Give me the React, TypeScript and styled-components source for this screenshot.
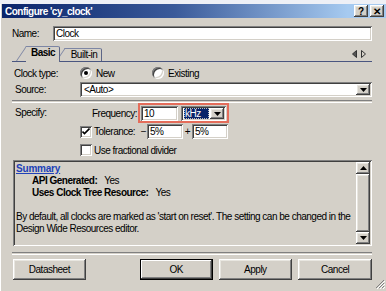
import React from 'react';
import styled, { createGlobalStyle, css } from 'styled-components';

const GlobalStyle = createGlobalStyle`
  html, body {
    margin: 0;
    padding: 0;
    background: #eef0f6;
  }
  body {
    font-family: "Liberation Sans", Arial, sans-serif;
    font-size: 10px;
    letter-spacing: -0.5px;
    color: #000;
  }
`;

const raised = css`
  background: #d4d0c8;
  box-shadow: inset -1px -1px #404040, inset 1px 1px #ffffff,
    inset -2px -2px #808080, inset 2px 2px #e8e6e0;
`;

const sunken = css`
  background: #ffffff;
  box-shadow: inset 1px 1px #808080, inset -1px -1px #ffffff,
    inset 2px 2px #404040, inset -2px -2px #d4d0c8;
`;

const Window = styled.div`
  position: relative;
  margin-top: 4px;
  width: 386px;
  height: 287px;
  box-sizing: border-box;
  padding-left: 2px;
  background: #d4d0c8;
  box-shadow: inset 1px 0 #ffffff;
  display: flex;
  flex-direction: column;
`;

const TitleBar = styled.div`
  height: 14px;
  display: flex;
  align-items: center;
  padding: 0 2px 0 3px;
  background: linear-gradient(90deg, #0a246a 0%, #3a5a9a 45%, #a6caf0 90%);
  color: #ffffff;
  font-weight: bold;
`;

const TitleButtons = styled.div`
  margin-left: auto;
  display: flex;
  gap: 2px;
`;

const TitleButton = styled.div`
  ${raised};
  width: 14px;
  height: 12px;
  display: flex;
  align-items: center;
  justify-content: center;
  color: #000;
  font-size: 10px;
  letter-spacing: 0;
  font-weight: bold;
`;

const Body = styled.div`
  flex: 1;
  display: flex;
  flex-direction: column;
  padding: 8px 14px 0 10px;
`;

const Row = styled.div<{ $h: number; $mt?: number }>`
  display: flex;
  align-items: center;
  height: ${(p) => p.$h}px;
  margin-top: ${(p) => p.$mt ?? 0}px;
`;

const Label = styled.div<{ $w: number; $pl?: number }>`
  width: ${(p) => p.$w}px;
  padding-left: ${(p) => p.$pl ?? 0}px;
  box-sizing: border-box;
  flex: none;
  white-space: nowrap;
`;

const TextBox = styled.div<{ $w?: number }>`
  ${sunken};
  height: 15px;
  box-sizing: border-box;
  ${(p) => (p.$w ? `width: ${p.$w}px; flex: none;` : 'flex: 1;')}
  padding: 2px 3px 0;
  line-height: 12px;
  white-space: nowrap;
  overflow: hidden;
`;

const Select = styled.div<{ $w?: number }>`
  ${sunken};
  height: 15px;
  box-sizing: border-box;
  ${(p) => (p.$w ? `width: ${p.$w}px; flex: none;` : 'flex: 1;')}
  display: flex;
  align-items: center;
  padding: 2px 2px 2px 3px;
`;

const SelectText = styled.div<{ $hl?: boolean }>`
  flex: 1;
  height: 11px;
  line-height: 11px;
  padding-left: 1px;
  ${(p) =>
    p.$hl &&
    css`
      background: #0a246a;
      color: #ffffff;
      outline: 1px dotted #c0c0c0;
      outline-offset: -1px;
      margin-right: 1px;
    `}
`;

const DropButton = styled.div`
  ${raised};
  width: 14px;
  height: 11px;
  flex: none;
  display: flex;
  align-items: center;
  justify-content: center;
`;

const TabStrip = styled.div`
  margin-top: 4px;
  height: 16px;
  display: flex;
  align-items: flex-end;
  padding-left: 4px;
  border-bottom: 1px solid #4a5680;
`;

const Tab = styled.div<{ $active?: boolean; $w: number }>`
  position: relative;
  width: ${(p) => p.$w}px;
  height: ${(p) => (p.$active ? 16 : 13)}px;
  margin-bottom: ${(p) => (p.$active ? -1 : 0)}px;
  margin-left: ${(p) => (p.$active ? 0 : -4)}px;
  z-index: ${(p) => (p.$active ? 2 : 1)};
  font-weight: ${(p) => (p.$active ? 'bold' : 'normal')};

  &::before {
    content: '';
    position: absolute;
    left: 0;
    bottom: ${(p) => (p.$active ? 1 : 0)}px;
    height: ${(p) => (p.$active ? 15 : 13)}px;
    width: 18px;
    background: #d4d0c8;
    border-left: 1px solid #7d86a4;
    border-top: 1px solid #7d86a4;
    box-sizing: border-box;
    transform: skewX(-34deg);
    transform-origin: bottom left;
  }
  &::after {
    content: '';
    position: absolute;
    left: 10px;
    right: 0;
    top: 0;
    bottom: 0;
    background: #d4d0c8;
    border-top: 1px solid #7d86a4;
    border-right: 1px solid #5c6586;
    border-top-right-radius: 2px;
    box-sizing: border-box;
  }
`;

const TabLabel = styled.span`
  position: relative;
  z-index: 1;
  display: block;
  padding-left: 10px;
  text-align: center;
  line-height: 14px;
`;

const TabArrows = styled.div`
  margin-left: auto;
  margin-right: 6px;
  margin-bottom: 3px;
  display: flex;
  gap: 4px;
`;

const RadioCircle = styled.div<{ $on?: boolean }>`
  position: relative;
  width: 12px;
  height: 12px;
  flex: none;
  border-radius: 50%;
  background: #ffffff;
  box-shadow: inset 1px 1px #808080, inset -1px -1px #ffffff,
    inset 2px 2px #404040, inset -2px -2px #d4d0c8;
  &::after {
    content: '';
    display: ${(p) => (p.$on ? 'block' : 'none')};
    position: absolute;
    left: 4px;
    top: 4px;
    width: 4px;
    height: 4px;
    border-radius: 50%;
    background: #000;
  }
`;

const Option = styled.div<{ $w?: number }>`
  display: flex;
  align-items: center;
  gap: 4px;
  ${(p) => (p.$w ? `width: ${p.$w}px;` : '')}
`;

const CheckBox = styled.div`
  ${sunken};
  width: 12px;
  height: 12px;
  flex: none;
  display: flex;
  align-items: center;
  justify-content: center;
`;

const Etched = styled.div<{ $mt: number }>`
  margin-top: ${(p) => p.$mt}px;
  height: 1px;
  border-top: 1px solid #808080;
  border-bottom: 1px solid #ffffff;
`;

const SpecifyGrid = styled.div`
  display: grid;
  grid-template-columns: 68px 1fr;
`;

const SpecifyLabel = styled.div`
  padding: 4px 0 0 3px;
`;

const SpecifyCol = styled.div`
  display: flex;
  flex-direction: column;
`;

const Highlight = styled.div`
  display: flex;
  gap: 3px;
  padding: 1px;
  width: 91px;
  height: 20px;
  box-sizing: border-box;
  border: 2px solid #e46d5b;
  margin-left: -2px;
`;

const Sign = styled.div<{ $w: number }>`
  width: ${(p) => p.$w}px;
  flex: none;
  text-align: center;
`;

const SummaryBox = styled.div`
  margin: 4px 0 0 1px;
  height: 86px;
  box-sizing: border-box;
  display: flex;
  background: #d4d0c8;
  box-shadow: inset 1px 1px #808080, inset -1px -1px #ffffff,
    inset 2px 2px #404040, inset -2px -2px #d4d0c8;
  padding: 2px;
`;

const SummaryText = styled.div`
  flex: 1;
  padding: 1px 0 0 1px;
  line-height: 12px;
  white-space: nowrap;
`;

const SummaryLink = styled.div`
  color: #2040b8;
  font-weight: bold;
  text-decoration: underline;
  letter-spacing: -0.2px;
`;

const SummaryItem = styled.div`
  padding-left: 16px;
  font-weight: bold;
`;

const ItemValue = styled.span`
  font-weight: normal;
  margin-left: 7px;
`;

const Para = styled.div`
  margin-top: 12px;
`;

const ScrollBar = styled.div`
  width: 14px;
  flex: none;
  display: flex;
  flex-direction: column;
`;

const ScrollBtn = styled.div`
  ${raised};
  height: 12px;
  display: flex;
  align-items: center;
  justify-content: center;
`;

const ScrollThumb = styled.div`
  ${raised};
  flex: 1;
`;

const ButtonRow = styled.div`
  margin-top: 4px;
  display: flex;
  padding-left: 1px;
`;

const Button = styled.div<{ $w: number; $ml?: number; $default?: boolean }>`
  ${raised};
  width: ${(p) => p.$w}px;
  margin-left: ${(p) => p.$ml ?? 0}px;
  height: 21px;
  display: flex;
  align-items: center;
  justify-content: center;
  ${(p) =>
    p.$default &&
    css`
      box-shadow: inset 0 0 0 1px #000, inset -2px -2px #404040,
        inset 2px 2px #ffffff, inset -3px -3px #808080;
    `}
`;

const Grip = styled.svg`
  position: absolute;
  right: 1px;
  bottom: 2px;
`;

const Tri = ({ dir }: { dir: 'down' | 'up' }) => (
  <svg width="7" height="4" viewBox="0 0 7 4">
    <path d={dir === 'down' ? 'M0 0h7L3.5 4z' : 'M0 4h7L3.5 0z'} fill="#000" />
  </svg>
);

const Check = () => (
  <svg width="8" height="7" viewBox="0 0 8 7">
    <path d="M0.5 3.5l2 2 5-5" stroke="#000" strokeWidth="1.6" fill="none" />
  </svg>
);

export default function App() {
  return (
    <>
      <GlobalStyle />
      <Window>
        <TitleBar>
          Configure 'cy_clock'
          <TitleButtons>
            <TitleButton>?</TitleButton>
            <TitleButton>✕</TitleButton>
          </TitleButtons>
        </TitleBar>
        <Body>
          <Row $h={15}>
            <Label $w={41}>Name:</Label>
            <TextBox>Clock</TextBox>
          </Row>

          <TabStrip>
            <Tab $active $w={44}>
              <TabLabel>Basic</TabLabel>
            </Tab>
            <Tab $w={46}>
              <TabLabel>Built-in</TabLabel>
            </Tab>
            <TabArrows>
              <svg width="5" height="8" viewBox="0 0 5 8">
                <path d="M4.5 0.5v7L0.5 4z" fill="#555" stroke="#333" />
              </svg>
              <svg width="5" height="8" viewBox="0 0 5 8">
                <path d="M0.5 0.5v7L4.5 4z" fill="#d4d0c8" stroke="#333" />
              </svg>
            </TabArrows>
          </TabStrip>

          <Row $h={14} $mt={4}>
            <Label $w={68} $pl={2}>Clock type:</Label>
            <Option $w={72}>
              <RadioCircle $on />
              New
            </Option>
            <Option>
              <RadioCircle />
              Existing
            </Option>
          </Row>

          <Row $h={15} $mt={2}>
            <Label $w={68} $pl={3}>Source:</Label>
            <Select>
              <SelectText>&lt;Auto&gt;</SelectText>
              <DropButton>
                <Tri dir="down" />
              </DropButton>
            </Select>
          </Row>

          <Etched $mt={3} />

          <SpecifyGrid>
            <SpecifyLabel>Specify:</SpecifyLabel>
            <SpecifyCol>
              <Row $h={20}>
                <Label $w={60} $pl={12}>Frequency:</Label>
                <Highlight>
                  <TextBox $w={37}>10</TextBox>
                  <Select $w={45}>
                    <SelectText $hl>kHz</SelectText>
                    <DropButton>
                      <Tri dir="down" />
                    </DropButton>
                  </Select>
                </Highlight>
              </Row>
              <Row $h={15} $mt={1}>
                <CheckBox>
                  <Check />
                </CheckBox>
                <Label $w={48} $pl={2}>Tolerance:</Label>
                <Sign $w={7}>−</Sign>
                <TextBox $w={36}>5%</TextBox>
                <Sign $w={9}>+</Sign>
                <TextBox $w={36}>5%</TextBox>
              </Row>
              <Row $h={12} $mt={5}>
                <CheckBox />
                <Label $w={120} $pl={2}>Use fractional divider</Label>
              </Row>
            </SpecifyCol>
          </SpecifyGrid>

          <SummaryBox>
            <SummaryText>
              <SummaryLink>Summary</SummaryLink>
              <SummaryItem>
                API Generated:<ItemValue>Yes</ItemValue>
              </SummaryItem>
              <SummaryItem>
                Uses Clock Tree Resource:<ItemValue>Yes</ItemValue>
              </SummaryItem>
              <Para>
                By default, all clocks are marked as 'start on reset'. The setting can be changed in the
                <br />
                Design Wide Resources editor.
              </Para>
            </SummaryText>
            <ScrollBar>
              <ScrollBtn>
                <Tri dir="up" />
              </ScrollBtn>
              <ScrollThumb />
              <ScrollBtn>
                <Tri dir="down" />
              </ScrollBtn>
            </ScrollBar>
          </SummaryBox>

          <Etched $mt={6} />

          <ButtonRow>
            <Button $w={73}>Datasheet</Button>
            <Button $w={73} $ml={54} $default>
              OK
            </Button>
            <Button $w={74} $ml={6}>
              Apply
            </Button>
            <Button $w={74} $ml={6}>
              Cancel
            </Button>
          </ButtonRow>
        </Body>
        <Grip width="10" height="10" viewBox="0 0 10 10">
          <path d="M9 1L1 9M9 4L4 9M9 7L7 9" stroke="#808080" strokeWidth="1" />
          <path d="M10 2L2 10M10 5L5 10M10 8L8 10" stroke="#ffffff" strokeWidth="1" />
        </Grip>
      </Window>
    </>
  );
}
